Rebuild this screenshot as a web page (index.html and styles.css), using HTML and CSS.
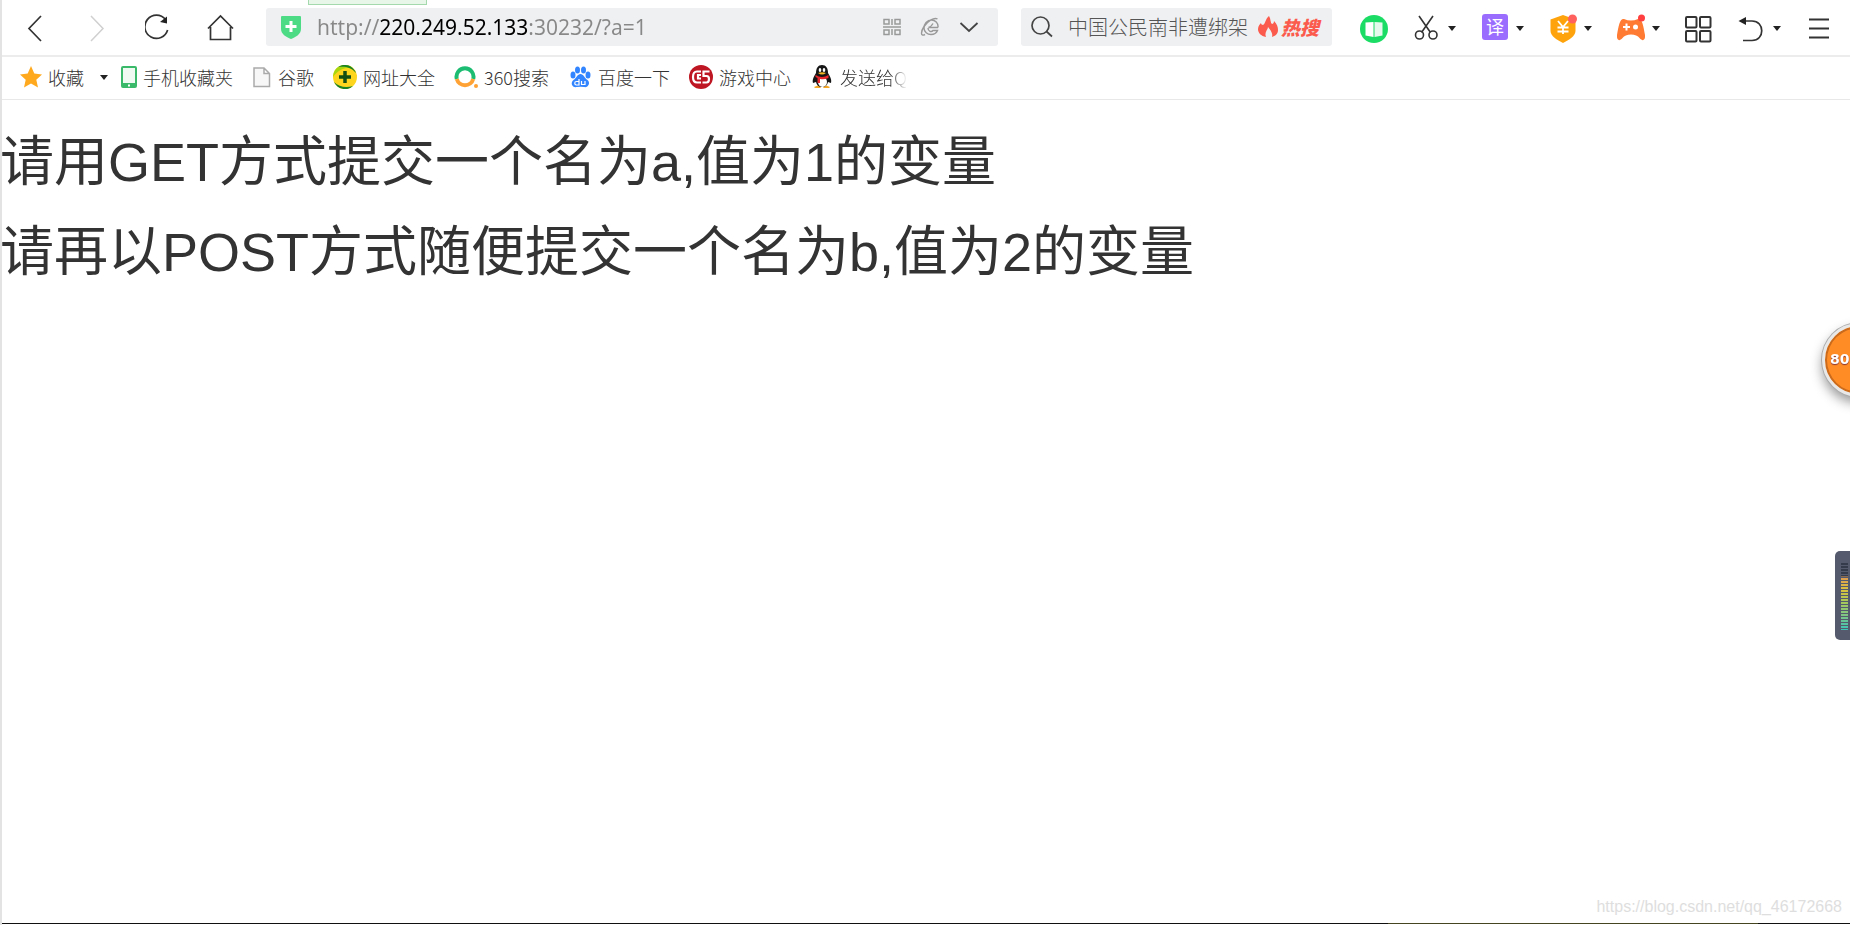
FILE: index.html
```html
<!DOCTYPE html>
<html lang="zh-CN">
  <head>
    <meta charset="UTF-8" />
    <meta name="viewport" content="width=device-width, initial-scale=1.0" />
    <title>POST&amp;GET</title>
    <link rel="stylesheet" href="styles.css">
  </head>
  <body>
    <header class="toolbar">
      <div class="tab-hint"></div>
      <nav class="nav">
        <button type="button" aria-label="后退">
          <svg width="28" height="30" viewBox="0 0 28 30"><path d="M20 3 8 15.500 20 28" fill="none" stroke="#333" stroke-width="1.700"/></svg>
        </button>
        <button type="button" aria-label="前进">
          <svg width="28" height="30" viewBox="0 0 28 30"><path d="M8 3 20 15.500 8 28" fill="none" stroke="#d0d0d0" stroke-width="1.500"/></svg>
        </button>
        <button type="button" aria-label="刷新">
          <svg width="28" height="30" viewBox="0 0 28 30"><path d="M20.500 6.500A11.600 11.600 0 1 0 22.600 17" fill="none" stroke="#333" stroke-width="1.700"/><path d="M22 3.500V10.500L15 9z" fill="#222"/></svg>
        </button>
        <button type="button" aria-label="主页">
          <svg width="28" height="30" viewBox="0 0 28 30"><path d="M1 15.500 13.500 3 26 15.500M3.500 14V26.500H23.500V14" fill="none" stroke="#333" stroke-width="1.700"/></svg>
        </button>
      </nav>

      <form class="address">
        <svg class="shield" width="22" height="24" viewBox="0 0 22 24"><path d="M1 2Q1 1 2 1H20Q21 1 21 2V14C21 19 16 22 11 24C6 22 1 19 1 14z" fill="#4edb86"/><path d="M11 6V17M5.500 11.500H16.500" stroke="#fff" stroke-width="3"/></svg>
        <input type="text" class="url" aria-label="地址" value="http://220.249.52.133:30232/?a=1" spellcheck="false" />
        <button type="button" aria-label="二维码">
          <svg width="18" height="18" viewBox="0 0 18 18" fill="none" stroke="#999" stroke-width="1.500"><path d="M1 1.500H6V6H1zM12 1.500H17V6H12zM1 12H6V16.500H1zM12 12H17V16.500H12zM9 1V7M9 11V17M0 9H18"/></svg>
        </button>
        <button type="button" aria-label="兼容模式">
          <svg width="20" height="20" viewBox="0 0 20 20" fill="none" stroke="#999" stroke-width="1.400"><path d="M18 10.500H8.500Q11.500 9.500 13 6.500M18 10.500C18.500 6 15 3 11.500 3C7 3 4 7 4 11C4 15 7.500 17.500 11 17.500C14 17.500 16.500 16 17.500 13.500H13C11.500 15.500 8 14.500 8 11M5 17.500C0 20 1 14 4 9.500C8 4 14 0 17.500 2"/></svg>
        </button>
        <button type="button" aria-label="历史地址">
          <svg width="20" height="20" viewBox="0 0 20 20"><path d="M1.500 6 10 14 18.500 6" fill="none" stroke="#444" stroke-width="1.800"/></svg>
        </button>
      </form>

      <form class="search">
        <button type="button" aria-label="搜索">
          <svg width="24" height="24" viewBox="0 0 24 24" fill="none" stroke="#444" stroke-width="1.700"><circle cx="10.500" cy="10.500" r="8.500"/><path d="M16.500 16.500 22 21.500"/></svg>
        </button>
        <input type="text" aria-label="搜索内容" placeholder="中国公民南非遭绑架" />
        <a href="#" class="hot">
          <svg width="20" height="22" viewBox="0 0 20 22"><path d="M11 0C13 3 12 6 14 8C15 8 16 7 16 5C19 8 20 11 20 14C20 18 17 20 14 21C15 17 13 15 10 11C10 14 6 16 8 21C3 20 0 17 0 13C0 10 2 8 3 7C3 8 4 9 5 9C8 7 7 3 11 0z" fill="#fb5b4d"/></svg>
          <span>热搜</span>
        </a>
      </form>

      <div class="tools">
        <button type="button" aria-label="阅读">
          <svg width="28" height="28" viewBox="0 0 28 28"><circle cx="14" cy="14" r="14" fill="#1bdd65"/><path d="M5.500 7.500 13.500 7V22L5.500 20.500z" fill="#fff"/><path d="M14.500 7 22.500 7.500V20.500L14.500 22z" fill="#e5faec"/></svg>
        </button>
        <button type="button" aria-label="截图">
          <svg width="28" height="28" viewBox="0 0 28 28" fill="none" stroke="#333" stroke-width="1.600"><path d="M6 1 17.500 17.500M20 1 8.500 17.500"/><circle cx="6.500" cy="20" r="4"/><circle cx="20" cy="20" r="4"/></svg>
          <i class="caret"></i>
        </button>
        <button type="button" aria-label="翻译">
          <span class="translate">译</span>
          <i class="caret"></i>
        </button>
        <button type="button" aria-label="购物">
          <svg width="28" height="30" viewBox="0 0 28 30"><path d="M14 1 26.500 5.500V17C26.500 22 20 26 14 29C8 26 1.500 22 1.500 17V5.500z" fill="#ffa30c"/><path d="M9 7 14 13 19 7M8.500 13.500H19.500M8.500 17.500H19.500M14 13V20" fill="none" stroke="#fff" stroke-width="1.800"/><circle cx="23.500" cy="5" r="4.500" fill="#ff625e"/></svg>
          <i class="caret"></i>
        </button>
        <button type="button" aria-label="游戏">
          <svg width="28" height="30" viewBox="0 0 28 30"><path d="M7 5Q14 8 21 5C25 4 26.500 12 28 21C28.500 26 26 28 22.500 24Q20 20.500 14 20.500Q8 20.500 5.500 24C2 28-.5 26 0 21C1.500 12 3 4 7 5z" fill="#ff7a32"/><path d="M9.500 9.500V16.500M6 13H13" stroke="#fff" stroke-width="2"/><circle cx="18.500" cy="13" r="2.500" fill="#fff"/><circle cx="24.500" cy="4" r="3.500" fill="#ff3f40"/></svg>
          <i class="caret"></i>
        </button>
        <button type="button" aria-label="扩展">
          <svg width="28" height="28" viewBox="0 0 28 28" fill="none" stroke="#333" stroke-width="2"><rect x="1" y="2" width="10.500" height="10.500" rx="1"/><rect x="15" y="2" width="10.500" height="10.500" rx="1"/><rect x="1" y="16" width="10.500" height="10.500" rx="1"/><rect x="15" y="16" width="10.500" height="10.500" rx="1"/></svg>
        </button>
        <button type="button" aria-label="恢复">
          <svg width="28" height="28" viewBox="0 0 28 28"><path d="M4 6H14C27 6 27 25.500 14 25.500H5" fill="none" stroke="#333" stroke-width="1.700"/><path d="M.5 6 8 2V10z" fill="#222"/></svg>
          <i class="caret"></i>
        </button>
        <button type="button" aria-label="菜单">
          <svg width="28" height="28" viewBox="0 0 28 28"><path d="M3 4.500H23M3 13.500H23M3 22.500H23" stroke="#333" stroke-width="1.800"/></svg>
        </button>
      </div>
    </header>

    <nav class="bookmarks">
      <button type="button" class="favorites">
        <svg width="22" height="22" viewBox="0 0 22 22"><path d="M11 0 14.300 7.600 22 8.400 16.300 13.700 18 21.500 11 17.600 4 21.500 5.700 13.700 0 8.400 7.700 7.600z" fill="#ffa91f"/></svg>
        收藏
        <i class="caret"></i>
      </button>
      <a href="#">
        <svg width="16" height="22" viewBox="0 0 16 22"><rect x="1" y="1" width="14" height="20" rx="1" fill="#eefaf2" stroke="#3bb96b" stroke-width="2"/><path d="M1 17H15V21H1z" fill="#3bb96b"/><path d="M7 19.500H9" stroke="#fff" stroke-width="2"/></svg>
        手机收藏夹
      </a>
      <a href="#">
        <svg width="20" height="22" viewBox="0 0 20 22"><path d="M2 2H12L17.500 7.500V20.500H2zM12 2V7.500H17.500" fill="#f7f7f7" stroke="#aaa" stroke-width="1.500"/></svg>
        谷歌
      </a>
      <a href="#">
        <svg width="24" height="24" viewBox="0 0 24 24"><circle cx="12" cy="12" r="12" fill="#fcd51c"/><path d="M0 12A12 12 0 0 1 20 3C12 2 5 5 0 12z" fill="#a8d60e"/><path d="M5 2A12 12 0 0 1 23 8C18 2 12 1 5 2zM1 17A12 12 0 0 0 20 21C13 23 6 22 1 17z" fill="#188126"/><path d="M12 6V18M6 12H18" stroke="#144e12" stroke-width="3.500"/></svg>
        网址大全
      </a>
      <a href="#">
        <svg width="24" height="24" viewBox="0 0 24 24"><path d="M2.800 14A8.500 8.500 0 1 1 19.200 14" fill="none" stroke="#1cbd72" stroke-width="4"/><path d="M2.800 14A8.500 8.500 0 0 0 19.200 14" fill="none" stroke="#ffa235" stroke-width="4"/><circle cx="22" cy="21" r="2" fill="#ffa235"/></svg>
        360搜索
      </a>
      <a href="#">
        <svg width="24" height="24" viewBox="0 0 24 24" fill="#3385ff"><ellipse cx="5" cy="10" rx="2.500" ry="3.500"/><ellipse cx="9.500" cy="5" rx="2.500" ry="3.500"/><ellipse cx="15.500" cy="5" rx="2.500" ry="3.500"/><ellipse cx="20" cy="10" rx="2.500" ry="3.500"/><path d="M12.500 9C15.500 9 16.500 13 19.500 15C23 18 20 23 16 22Q12.500 21.500 9 22C4 23 2 18 5.500 15C8.500 13 9.500 9 12.500 9z"/><path d="M11 14V20H8.500A1.500 1.500 0 0 1 8.500 16.500H11M13.500 16V19.500H17V16" fill="none" stroke="#fff" stroke-width="1.200"/></svg>
        百度一下
      </a>
      <a href="#">
        <svg width="24" height="24" viewBox="0 0 24 24"><circle cx="12" cy="12" r="12" fill="#be1622"/><path d="M12 6.500H8Q4 6.500 4 12Q4 17.500 8 17.500H12M12 10H9V13.500H12M20.500 6.500H14.500V11H17.500Q20 11 20 14Q20 17.500 17.500 17.500H13.500" fill="none" stroke="#fff" stroke-width="2.200"/></svg>
        游戏中心
      </a>
      <a href="#" class="faded">
        <svg width="24" height="24" viewBox="0 0 24 24"><path d="M4 22 9 20 11 23H5zM20 22 15 20 13 23H19z" fill="#f5a623"/><path d="M12 0C16 0 18 3 18 8C20 11 22 15 21 18L18 17Q17 22 12 22Q7 22 6 17L3 18C2 15 4 11 6 8C6 3 8 0 12 0z" fill="#161616"/><ellipse cx="12.500" cy="17" rx="4.500" ry="5" fill="#fff"/><ellipse cx="10" cy="5" rx="1.300" ry="2" fill="#fff"/><ellipse cx="14" cy="5" rx="1.300" ry="2" fill="#fff"/><path d="M8 8Q12 6.500 16 8Q12 11 8 8z" fill="#f5b623"/><path d="M5.500 10Q12 14 18.500 10V13Q14 15 10 14V18H7.500V13L5.500 12z" fill="#e8262c"/></svg>
        发送给Q
      </a>
    </nav>

    <main>
      <h1>请用GET方式提交一个名为a,值为1的变量</h1>
      <h1>请再以POST方式随便提交一个名为b,值为2的变量</h1>
    </main>

    <footer>
      <span class="watermark">https://blog.csdn.net/qq_46172668</span>
    </footer>

    <div class="ball">80</div>
    <div class="meter"><div class="bars"></div></div>
  </body>
</html>
```
FILE: styles.css
```css
* {
  box-sizing: border-box;
}
body {
  margin: 0;
  min-height: 100vh;
  display: flex;
  flex-direction: column;
  border-left: 2px solid #e3e3e3;
  background-color: #fff;
  color: #333;
  font-family: "Noto Sans CJK SC", sans-serif;
  font-weight: 300;
  overflow-x: hidden;
}
button {
  display: flex;
  align-items: center;
  padding: 0;
  border: none;
  background: none;
  color: inherit;
  font: inherit;
  cursor: pointer;
}
input {
  min-width: 0;
  padding: 0;
  border: none;
  outline: none;
  background: none;
}
svg {
  display: block;
  flex: none;
}
a {
  color: inherit;
  text-decoration: none;
}

/* toolbar */
.toolbar {
  position: relative;
  display: flex;
  align-items: center;
  height: 57px;
  padding: 0 16px 2px 19px;
  border-bottom: 2px solid #ececec;
}
.tab-hint {
  position: absolute;
  top: 0;
  left: 306px;
  width: 119px;
  height: 5px;
  border: 1px solid #a3d9ac;
  border-top: none;
  background-color: #e7f6e8;
}
.nav {
  display: flex;
  gap: 34px;
  margin: 2px 31px 0 0;
}
.address,
.search {
  display: flex;
  align-items: center;
  height: 38px;
  border-radius: 3px;
  background-color: #eff0f2;
}
.address {
  flex: 1;
  gap: 19px;
  min-width: 0;
  padding: 0 19px 0 14px;
}
.address .shield {
  margin-right: -4px;
}
.url {
  flex: 1;
  height: 30px;
  font: 21px "Noto Sans", sans-serif;
  color: transparent;
  caret-color: #000;
  /* host is dark, the rest of the address is grey */
  background: linear-gradient(to right, #888 62px, #000 62px, #000 212px, #888 212px);
  -webkit-background-clip: text;
  background-clip: text;
}
.search {
  width: 311px;
  margin: 0 28px 0 23px;
  padding: 0 13px 0 9px;
}
.search input {
  flex: 1;
  margin-left: 14px;
  font: 300 20px "Noto Sans CJK SC", sans-serif;
}
.search input::placeholder {
  color: #555;
  opacity: 1;
}
.hot {
  display: flex;
  align-items: center;
  gap: 3px;
  color: #fb5b4d;
  font-size: 19px;
  font-weight: 900;
  font-style: italic;
}
.tools {
  display: flex;
  align-items: center;
  gap: 25px;
  margin-top: 4px;
}
.tools button {
  gap: 7px;
}
.caret {
  border: 4px solid transparent;
  border-top: 5px solid #222;
  border-bottom: none;
}
.translate {
  width: 26px;
  height: 26px;
  margin: 0 1px 4px;
  border-radius: 3px;
  background-color: #9b6dff;
  color: #fff;
  font-size: 18px;
  font-weight: 400;
  line-height: 25px;
  text-align: center;
}

/* bookmarks */
.bookmarks {
  display: flex;
  align-items: center;
  gap: 19px;
  height: 43px;
  padding: 0 18px 2px;
  border-bottom: 1px solid #e8e8e8;
  font-size: 18px;
  white-space: nowrap;
}
.bookmarks a,
.favorites {
  display: flex;
  align-items: center;
  gap: 6px;
}
.favorites {
  margin-right: -6px;
}
.favorites .caret {
  margin-left: 10px;
}
.faded {
  -webkit-mask-image: linear-gradient(to right, #000 80px, transparent);
  mask-image: linear-gradient(to right, #000 80px, transparent);
}

/* page */
main {
  flex: 1;
  margin-left: -2px;
  padding-top: 2px;
}
h1 {
  margin: 30px 0;
  font-family: "Liberation Sans", "Noto Sans CJK SC", sans-serif;
  font-size: 54px;
  font-weight: 400;
  line-height: 60px;
}
footer {
  margin-bottom: 1px;
  padding: 0 8px 7px;
  background: linear-gradient(to right, #111 75%, #454522 75%, #454522 95%, #111 95%) bottom / 100% 1px no-repeat;
  text-align: right;
}
.watermark {
  color: #dedede;
  font: 16px/20px "Liberation Sans", sans-serif;
}

/* widgets hanging over the right edge */
.ball {
  position: fixed;
  top: 323px;
  right: -46px;
  width: 74px;
  height: 74px;
  padding-left: 5px;
  border: 3px solid #e8e8e8;
  border-radius: 50%;
  background-color: #ff8c24;
  box-shadow: 0 0 0 1px #aaa, inset 0 0 0 2px #c96a1c, 0 6px 12px #999;
  color: #fff;
  font: bold 14px/66px "DejaVu Sans", sans-serif;
  text-shadow: 0 1px 1px #833;
}
.meter {
  position: fixed;
  top: 551px;
  right: 0;
  width: 15px;
  height: 89px;
  padding: 11px 2px 10px 6px;
  border-radius: 5px 0 0 5px;
  background-color: #555a6c;
}
.bars {
  height: 68px;
  background:
    repeating-linear-gradient(#555a6c 0 1px, transparent 1px 3px),
    linear-gradient(#363b4b 14px, #e09a50 15px, #d9c33f 28px, #a8c95a 40px, #7cc586 54px, #3cc5b8);
}
```
